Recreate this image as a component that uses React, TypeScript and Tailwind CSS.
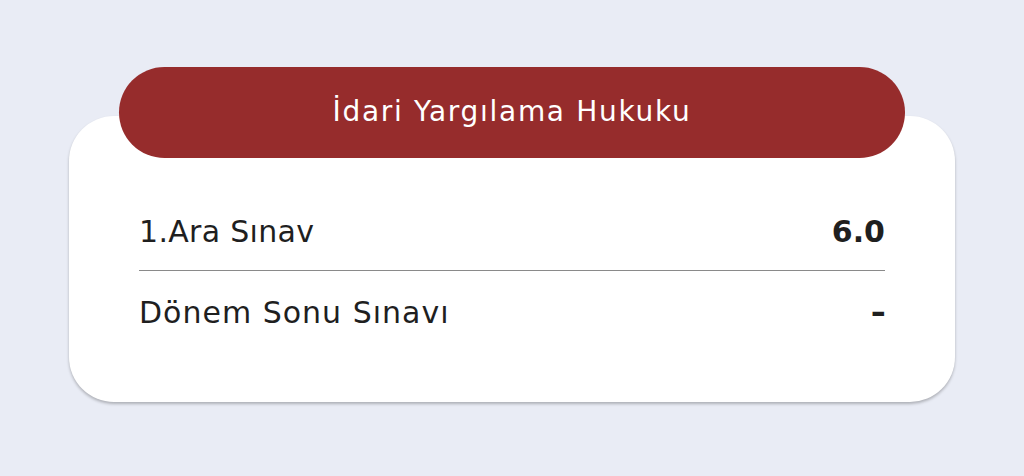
export default function App() {
  return (
    <div className="w-[1024px] h-[476px] bg-[#e9ecf5] flex flex-col items-center pt-[67px]" style={{ fontFamily: "'DejaVu Sans', sans-serif" }}>
      <div className="relative w-[886px]">
        <div className="relative z-10 mx-[50px] h-[91px] rounded-full bg-[#962c2c] flex items-center justify-center">
          <span className="text-white text-[28px] leading-none tracking-[1.7px] -mt-[1px]">İdari Yargılama Hukuku</span>
        </div>
        <div className="-mt-[42px] bg-white rounded-[45px] shadow-[0_2px_3px_rgba(0,0,0,0.25)] pt-[77px] pb-[49px] px-[70px]">
          <div className="h-[78px] flex items-center justify-between border-b border-[#8a8a8a] text-[#1f1f1f]">
            <span className="text-[30px] tracking-[0.3px]">1.Ara Sınav</span>
            <span className="text-[30px] font-bold">6.0</span>
          </div>
          <div className="h-[82px] flex items-center justify-between text-[#1f1f1f]">
            <span className="text-[30px] tracking-[1px]">Dönem Sonu Sınavı</span>
            <span className="text-[30px] font-bold scale-x-125 -translate-x-[1px]">-</span>
          </div>
        </div>
      </div>
    </div>
  );
}
